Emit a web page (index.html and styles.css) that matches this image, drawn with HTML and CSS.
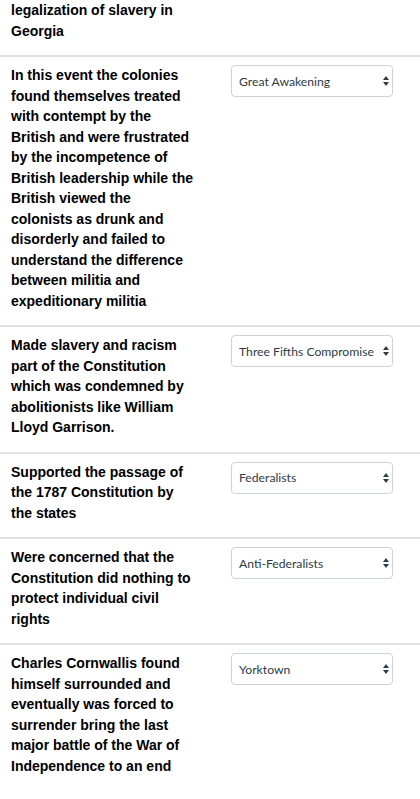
FILE: index.html
```html
<!DOCTYPE html>
<html lang="en">
<head>
<meta charset="utf-8">
<title>Matching</title>
<link rel="stylesheet" href="styles.css">
</head>
<body>
<div class="list">
  <div class="item first">
    <div class="prompt">legalization of slavery in Georgia</div>
    <div class="answer"></div>
  </div>
  <div class="item">
    <div class="prompt">In this event the colonies found themselves treated with contempt by the British and were frustrated by the incompetence of British leadership while the British viewed the colonists as drunk and disorderly and failed to understand the difference between militia and expeditionary militia</div>
    <div class="answer">
      <div class="select-wrap">
        <select class="select"><option>Great Awakening</option></select>
        <svg class="arrows" width="6" height="10" viewBox="0 0 6 10"><path d="M3 0L6 4H0Z M3 10L0 6H6Z" fill="#2d3b45"/></svg>
      </div>
    </div>
  </div>
  <div class="item">
    <div class="prompt">Made slavery and racism part of the Constitution which was condemned by abolitionists like William Lloyd Garrison.</div>
    <div class="answer">
      <div class="select-wrap">
        <select class="select"><option>Three Fifths Compromise</option></select>
        <svg class="arrows" width="6" height="10" viewBox="0 0 6 10"><path d="M3 0L6 4H0Z M3 10L0 6H6Z" fill="#2d3b45"/></svg>
      </div>
    </div>
  </div>
  <div class="item">
    <div class="prompt">Supported the passage of the 1787 Constitution by the states</div>
    <div class="answer">
      <div class="select-wrap">
        <select class="select"><option>Federalists</option></select>
        <svg class="arrows" width="6" height="10" viewBox="0 0 6 10"><path d="M3 0L6 4H0Z M3 10L0 6H6Z" fill="#2d3b45"/></svg>
      </div>
    </div>
  </div>
  <div class="item">
    <div class="prompt">Were concerned that the Constitution did nothing to protect individual civil rights</div>
    <div class="answer">
      <div class="select-wrap">
        <select class="select"><option>Anti-Federalists</option></select>
        <svg class="arrows" width="6" height="10" viewBox="0 0 6 10"><path d="M3 0L6 4H0Z M3 10L0 6H6Z" fill="#2d3b45"/></svg>
      </div>
    </div>
  </div>
  <div class="item">
    <div class="prompt">Charles Cornwallis found himself surrounded and eventually was forced to surrender bring the last major battle of the War of Independence to an end</div>
    <div class="answer">
      <div class="select-wrap">
        <select class="select"><option>Yorktown</option></select>
        <svg class="arrows" width="6" height="10" viewBox="0 0 6 10"><path d="M3 0L6 4H0Z M3 10L0 6H6Z" fill="#2d3b45"/></svg>
      </div>
    </div>
  </div>
</div>
</body>
</html>
```

FILE: styles.css
```css
html, body {
  margin: 0;
  padding: 0;
  background: #ffffff;
}

.list {
  display: flex;
  flex-direction: column;
}

.item {
  display: grid;
  grid-template-columns: 184px 162px;
  column-gap: 36px;
  padding: 8px 0 14px 11px;
  border-top: 2px solid #e2e2e2;
}

.item.first {
  border-top: none;
  padding-top: 0;
}

.prompt {
  font-family: "Liberation Sans", Arial, sans-serif;
  font-weight: bold;
  font-size: 14px;
  line-height: 20.5px;
  color: #000000;
}

.select-wrap {
  position: relative;
  width: 162px;
  height: 32px;
}

.select {
  appearance: none;
  -webkit-appearance: none;
  box-sizing: border-box;
  width: 162px;
  height: 32px;
  margin: 0;
  padding: 0 18px 0 7px;
  border: 1px solid #cfd3d6;
  border-radius: 4px;
  background: #ffffff;
  font-family: Lato, sans-serif;
  font-size: 12.2px;
  color: #2d3b45;
  outline: none;
}

.arrows {
  position: absolute;
  right: 4px;
  top: 11px;
  pointer-events: none;
}
```
